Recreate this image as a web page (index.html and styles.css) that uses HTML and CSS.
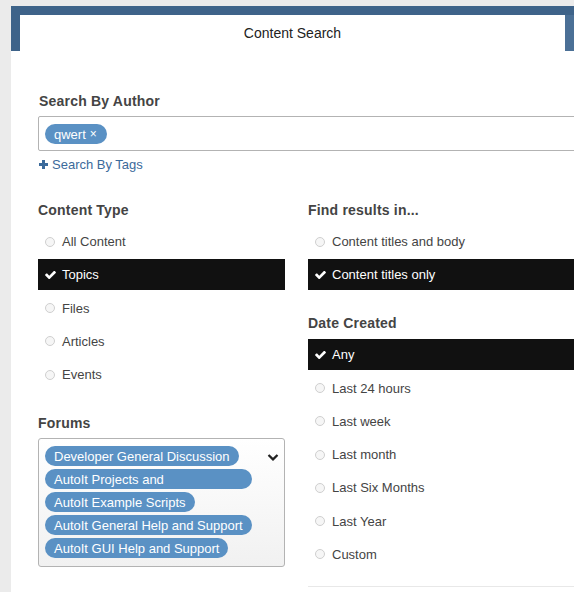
FILE: index.html
```html
<!DOCTYPE html>
<html>
<head>
<meta charset="utf-8">
<link rel="stylesheet" href="styles.css">
</head>
<body>
<div class="panel">
  <div class="tabs">
    <div class="tab">Content Search</div>
    <div class="tab-next"></div>
  </div>
  <div class="content">
    <h2 class="heading heading-author">Search By Author</h2>
    <div class="token-input">
      <span class="token">qwert<span class="token-x">×</span></span>
    </div>
    <div class="tags-link">
      <svg class="plus" viewBox="0 0 9 9" width="9" height="9"><path d="M3 0h3v3h3v3H6v3H3V6H0V3h3z"/></svg>
      <span>Search By Tags</span>
    </div>
    <div class="columns">
      <div class="col">
        <div class="group">
          <h2 class="heading">Content Type</h2>
          <div class="option"><span class="radio"></span>All Content</div>
          <div class="option selected"><svg class="check" viewBox="110 240 1570 1220" width="11" height="9"><path d="M1671 566q0 40-28 68l-724 724-136 136q-28 28-68 28t-68-28l-136-136-362-362q-28-28-28-68t28-68l136-136q28-28 68-28t68 28l294 295 656-657q28-28 68-28t68 28l136 136q28 28 28 68z"/></svg>Topics</div>
          <div class="option"><span class="radio"></span>Files</div>
          <div class="option"><span class="radio"></span>Articles</div>
          <div class="option"><span class="radio"></span>Events</div>
        </div>
        <div class="group">
          <h2 class="heading heading-forums">Forums</h2>
          <div class="forums-box">
            <div class="forum-list">
              <span class="pill">Developer General Discussion</span>
              <span class="pill pill-wide">AutoIt Projects and</span>
              <span class="pill">AutoIt Example Scripts</span>
              <span class="pill">AutoIt General Help and Support</span>
              <span class="pill">AutoIt GUI Help and Support</span>
            </div>
            <svg class="chevron" viewBox="90 330 1612 1250" width="12" height="8"><path d="M1683 808l-742 741q-19 19-45 19t-45-19l-742-741q-19-19-19-45.5t19-45.5l166-165q19-19 45-19t45 19l531 531 531-531q19-19 45-19t45 19l166 165q19 19 19 45.5t-19 45.5z"/></svg>
          </div>
        </div>
      </div>
      <div class="col">
        <div class="group">
          <h2 class="heading">Find results in...</h2>
          <div class="option"><span class="radio"></span>Content titles and body</div>
          <div class="option selected"><svg class="check" viewBox="110 240 1570 1220" width="11" height="9"><path d="M1671 566q0 40-28 68l-724 724-136 136q-28 28-68 28t-68-28l-136-136-362-362q-28-28-28-68t28-68l136-136q28-28 68-28t68 28l294 295 656-657q28-28 68-28t68 28l136 136q28 28 28 68z"/></svg>Content titles only</div>
        </div>
        <div class="group">
          <h2 class="heading">Date Created</h2>
          <div class="option selected"><svg class="check" viewBox="110 240 1570 1220" width="11" height="9"><path d="M1671 566q0 40-28 68l-724 724-136 136q-28 28-68 28t-68-28l-136-136-362-362q-28-28-28-68t28-68l136-136q28-28 68-28t68 28l294 295 656-657q28-28 68-28t68 28l136 136q28 28 28 68z"/></svg>Any</div>
          <div class="option"><span class="radio"></span>Last 24 hours</div>
          <div class="option"><span class="radio"></span>Last week</div>
          <div class="option"><span class="radio"></span>Last month</div>
          <div class="option"><span class="radio"></span>Last Six Months</div>
          <div class="option"><span class="radio"></span>Last Year</div>
          <div class="option"><span class="radio"></span>Custom</div>
        </div>
        <div class="divider"></div>
      </div>
    </div>
  </div>
</div>
</body>
</html>
```

FILE: styles.css
```css
html, body {
  margin: 0;
  padding: 0;
  overflow: hidden;
}
body {
  background: #ebebeb;
  font-family: "Liberation Sans", Arial, sans-serif;
  font-size: 13px;
  color: #444;
}
.panel {
  margin: 6px 0 0 11px;
  width: 640px;
  min-height: 600px;
  background: #fff;
}
.tabs {
  display: flex;
  background: #3e6389;
  padding: 9px 0 0 9px;
}
.tab {
  width: 545px;
  height: 36px;
  background: #fff;
  display: flex;
  align-items: center;
  justify-content: center;
  font-size: 14px;
  color: #222;
}
.tab-next {
  width: 40px;
  height: 36px;
  background: #4b7096;
}
.content {
  padding: 40px 0 0 27px;
}
.heading {
  margin: 0 0 6px;
  font-size: 14px;
  line-height: 20px;
  font-weight: bold;
  color: #444;
  letter-spacing: 0.2px;
}
.heading-author {
  margin-bottom: 5px;
  padding-left: 1px;
}
.heading-forums {
  margin-bottom: 5px;
}
.token-input {
  width: 600px;
  height: 35px;
  box-sizing: border-box;
  border: 1px solid #b3b3b3;
  border-radius: 2px;
  padding: 7px 6px;
}
.token {
  display: inline-flex;
  align-items: center;
  height: 20px;
  padding: 0 10px 0 9px;
  border-radius: 10px;
  background: #5a91c4;
  color: #fff;
  font-size: 13px;
}
.token-x {
  margin-left: 4px;
  font-size: 12px;
}
.tags-link {
  margin-top: 3px;
  display: flex;
  align-items: center;
  gap: 4px;
  height: 20px;
  padding-left: 1px;
  color: #3b6a9b;
  font-size: 13px;
}
.plus {
  fill: #3b6a9b;
}
.columns {
  display: grid;
  grid-template-columns: 247px 300px;
  column-gap: 23px;
  margin-top: 26px;
}
.group + .group {
  margin-top: 23px;
}
.option {
  display: flex;
  align-items: center;
  gap: 7px;
  height: 31px;
  margin-bottom: 2.25px;
  padding-left: 7px;
  font-size: 13px;
  color: #444;
}
.radio {
  width: 10px;
  height: 10px;
  box-sizing: border-box;
  border: 1px solid #cfcfcf;
  border-radius: 50%;
  background: #f6f6f6;
  flex: none;
}
.option.selected {
  background: #111;
  color: #fff;
  gap: 6px;
}
.check {
  fill: #fff;
  flex: none;
}
.forums-box {
  display: flex;
  justify-content: space-between;
  align-items: flex-start;
  box-sizing: border-box;
  width: 247px;
  border: 1px solid #b3b3b3;
  border-radius: 3px;
  padding: 7px 5px 5px 6px;
  background: linear-gradient(#fff, #f1f1f1);
}
.forum-list {
  display: flex;
  flex-direction: column;
  align-items: flex-start;
}
.pill {
  display: flex;
  align-items: center;
  height: 20px;
  margin-bottom: 3px;
  padding: 0 9px;
  border-radius: 10px;
  background: #5a91c4;
  color: #fff;
  font-size: 13px;
  white-space: nowrap;
}
.pill-wide {
  width: 207px;
  box-sizing: border-box;
}
.chevron {
  fill: #222;
  margin-top: 7px;
  flex: none;
}
.divider {
  margin-top: 16px;
  border-top: 1px solid #e8e8e8;
}
```
